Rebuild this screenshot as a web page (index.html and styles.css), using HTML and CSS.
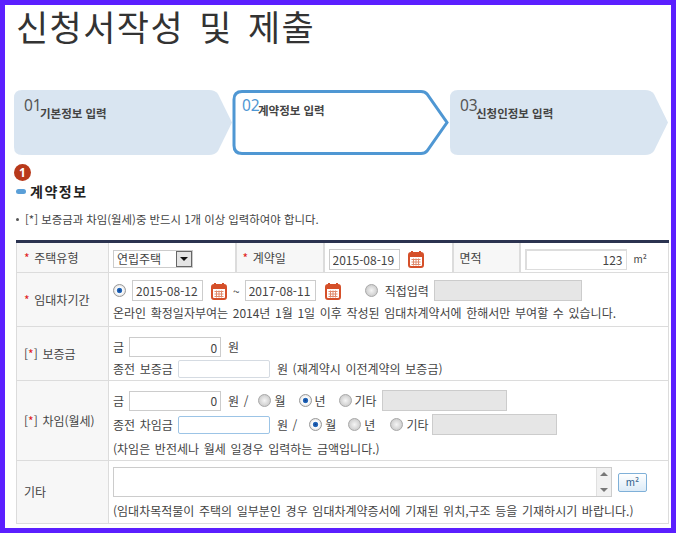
FILE: index.html
```html
<!DOCTYPE html>
<html lang="ko">
<head>
<meta charset="utf-8">
<title>신청서작성 및 제출</title>
<link rel="stylesheet" href="styles.css">
</head>
<body>
<svg class="defs" width="0" height="0">
  <symbol id="cal" viewBox="0 0 16 18">
    <rect x="1" y="3" width="14" height="14" rx="2" fill="#fff" stroke="#d5502a" stroke-width="2"/>
    <rect x="1" y="3" width="14" height="4" fill="#d5502a"/>
    <path d="M4 1v3M12 1v3" stroke="#d5502a" stroke-width="2"/>
    <path d="M3.500 9.500h9M3.500 12h9M3.500 14.500h9M5.500 8.500v7M8 8.500v7M10.500 8.500v7" stroke="#e08a6c" stroke-width="1"/>
  </symbol>
</svg>
<div class="page">
  <h1 class="title">신청서작성 및 제출</h1>
  <ol class="steps">
    <li class="step">
      <svg class="shape" viewBox="0 0 218 65"><path d="M8 0H195Q201 0 204 4L218 32.500L204 61Q201 65 195 65H8Q0 65 0 57V8Q0 0 8 0Z" fill="#d9e5f1"/></svg>
      <span class="num">01</span><span class="label low">기본정보 입력</span>
    </li>
    <li class="step cur">
      <svg class="shape" viewBox="0 0 218 65"><path d="M10 1.500H189Q193 1.500 195 4L215 32.500L195 61Q193 63.500 189 63.500H10Q2 63.500 2 55.500V9.500Q2 1.500 10 1.500Z" fill="#fff" stroke="#4f97d3" stroke-width="3"/></svg>
      <span class="num">02</span><span class="label">계약정보 입력</span>
    </li>
    <li class="step">
      <svg class="shape" viewBox="0 0 218 65"><path d="M8 0H195Q201 0 204 4L218 32.500L204 61Q201 65 195 65H8Q0 65 0 57V8Q0 0 8 0Z" fill="#d9e5f1"/></svg>
      <span class="num">03</span><span class="label low">신청인정보 입력</span>
    </li>
  </ol>
  <div class="badge">1</div>
  <h2 class="head"><span class="pill"></span>계약정보</h2>
  <p class="note"><span class="dot"></span>[*] 보증금과 차임(월세)중 반드시 1개 이상 입력하여야 합니다.</p>
  <table class="form">
    <colgroup><col class="c1"><col class="c2"><col class="c3"><col class="c4"><col class="c5"><col class="c6"></colgroup>
    <tr class="r1">
      <th><i>*</i> 주택유형</th>
      <td><span class="select">연립주택<span class="arrow"></span></span></td>
      <th class="mid"><i>*</i> 계약일</th>
      <td><span class="line"><input class="date" value="2015-08-19"><svg class="calicon ml8"><use href="#cal"/></svg></span></td>
      <th class="mid">면적</th>
      <td><span class="line"><input class="area" value="123"><span class="ml7 unit">m²</span></span></td>
    </tr>
    <tr class="r2">
      <th><i>*</i> 임대차기간</th>
      <td colspan="5">
        <div class="line">
          <input type="radio" class="radio on" checked name="p"><input class="date ml6" value="2015-08-12"><svg class="calicon ml8"><use href="#cal"/></svg><span class="tilde">~</span><input class="date ml5" value="2017-08-11"><svg class="calicon ml9"><use href="#cal"/></svg>
          <input type="radio" class="radio ml24" name="p"><span class="ml7">직접입력</span><input class="off w148 ml5" disabled>
        </div>
        <div class="text mt4">온라인 확정일자부여는 2014년 1월 1일 이후 작성된 임대차계약서에 한해서만 부여할 수 있습니다.</div>
      </td>
    </tr>
    <tr class="r3">
      <th>[<i>*</i>] 보증금</th>
      <td colspan="5">
        <div class="line"><span>금</span><input class="money ml5" value="0"><span class="ml7">원</span></div>
        <div class="line mt3"><span>종전 보증금</span><input class="blank ml5"><span class="ml7">원 (재계약시 이전계약의 보증금)</span></div>
      </td>
    </tr>
    <tr class="r4">
      <th>[<i>*</i>] 차임(월세)</th>
      <td colspan="5">
        <div class="line"><span>금</span><input class="money ml5" value="0"><span class="ml7">원 /</span>
          <input type="radio" class="radio ml10" name="a"><span class="ml3">월</span>
          <input type="radio" class="radio on ml13" checked name="a"><span class="ml3">년</span>
          <input type="radio" class="radio ml13" name="a"><span class="ml3">기타</span><input class="off w125 ml5" disabled></div>
        <div class="line mt3"><span>종전 차임금</span><input class="blank focus ml5"><span class="ml7">원 /</span>
          <input type="radio" class="radio on ml12" checked name="b"><span class="ml3">월</span>
          <input type="radio" class="radio ml12" name="b"><span class="ml3">년</span>
          <input type="radio" class="radio ml15" name="b"><span class="ml3">기타</span><input class="off w125 ml4" disabled></div>
        <div class="text mt6">(차임은 반전세나 월세 일경우 입력하는 금액입니다.)</div>
      </td>
    </tr>
    <tr class="r5">
      <th>기타</th>
      <td colspan="5">
        <div class="line">
          <div class="area-box"><span class="scroll"><b class="up"></b><b class="down"></b></span></div>
          <button class="btn" type="button">m²</button>
        </div>
        <div class="text mt6">(임대차목적물이 주택의 일부분인 경우 임대차계약증서에 기재된 위치,구조 등을 기재하시기 바랍니다.)</div>
      </td>
    </tr>
  </table>
</div>
</body>
</html>
```
FILE: styles.css
```css
* { box-sizing: border-box; }
html, body { margin: 0; padding: 0; }
body { font-family: "Noto Sans CJK KR", "Noto Sans", sans-serif; background: #fff; color: #444; }
.defs { display: block; height: 0; }
input { margin: 0; flex: none; }
.page {
  width: 676px; height: 533px;
  border: 5px solid #5b1fff;
  padding: 0 3px 0 9px;
  background: #fff;
}
.title {
  margin: 0 0 0 2px; height: 85px;
  font-size: 35px; font-weight: 400; line-height: 41px; color: #333;
  word-spacing: 4px; letter-spacing: 1.400px;
}
.steps { list-style: none; margin: 0; padding: 0; display: flex; height: 65px; }
.step { position: relative; width: 218px; height: 65px; flex: none; }
.shape { position: absolute; left: 0; top: 0; width: 218px; height: 65px; }
.num {
  position: absolute; left: 10px; top: 5px;
  font: 400 15.500px/20px "Noto Sans", sans-serif; color: #555;
}
.cur .num { color: #4f97d3; }
.label {
  position: absolute; left: 26px; top: 12px;
  font-size: 11.500px; font-weight: 700; line-height: 16px; color: #444;
}
.low { top: 15px; }
.badge {
  width: 17px; height: 17px; margin-top: 9px; border-radius: 50%;
  background: #b8391a; color: #fff;
  font: 700 12px/17px "Noto Sans", sans-serif; text-align: center;
}
.head {
  margin: 0 0 0 2px; height: 21px; display: flex; align-items: center;
  font-size: 14px; font-weight: 700; line-height: 21px; color: #222; letter-spacing: 1.500px;
}
.pill { width: 10px; height: 5px; border-radius: 3px; background: #5a9fd8; margin-right: 4px; }
.note {
  margin: 8px 0 0 2px; height: 18px; display: flex; align-items: center;
  font-size: 11.400px; line-height: 18px; color: #444;
}
.dot { width: 3px; height: 3px; border-radius: 50%; background: #555; margin-right: 6px; }
.form {
  margin: 12px 0 0 2px; width: 652px; table-layout: fixed; border-collapse: collapse;
  border-top: 3px solid #2b3350; border-bottom: 1px solid #6b7080;
  font-size: 12px; line-height: 16px; word-spacing: 1.300px;
}
.c1 { width: 92px; } .c2 { width: 127px; } .c3 { width: 88px; }
.c4 { width: 129px; } .c5 { width: 67px; } .c6 { width: 149px; }
.form th, .form td { border: 1px solid #dcdcdc; padding: 0 0 0 4px; }
.form th {
  background: #f7f7f7; font-weight: 400; text-align: left; padding-left: 7px;
  white-space: nowrap; color: #444;
}
.form th.mid { padding-left: 6px; border-left-width: 2px; border-right-width: 2px; }
.form i { font-style: normal; color: #e02020; }
.r1 { height: 31px; } .r2 { height: 54px; } .r3 { height: 54px; } .r4 { height: 80px; } .r5 { height: 63px; }
.r1 td { padding-top: 3px; }
.r2 td, .r3 td, .r4 td, .r5 td { vertical-align: top; }
.r2 td { padding-top: 7px; }
.r3 td { padding-top: 10px; }
.r4 td { padding-top: 9px; }
.r5 td { padding-top: 6px; }
.line { display: flex; align-items: center; white-space: nowrap; }
.text { white-space: nowrap; }
.mt3 { margin-top: 3px; } .mt4 { margin-top: 4px; } .mt6 { margin-top: 6px; }
.ml3 { margin-left: 3px; } .ml4 { margin-left: 4px; } .ml5 { margin-left: 5px; } .ml6 { margin-left: 6px; }
.ml7 { margin-left: 7px; } .ml8 { margin-left: 8px; } .ml9 { margin-left: 9px; } .ml10 { margin-left: 10px; }
.ml12 { margin-left: 12px; } .ml13 { margin-left: 13px; } .ml15 { margin-left: 15px; } .ml24 { margin-left: 24px; }
input:not(.radio) {
  font: inherit; color: #444; padding: 0 3px; background: #fff;
  border: 1px solid #ccc; border-radius: 0; text-align: left; outline: none;
}
.date { width: 71px; height: 21px; }
.area { width: 102px; height: 21px; text-align: right !important; border-width: 2px 1px 1px 2px !important; border-color: #ddd !important; }
.money { width: 92px; height: 20px; text-align: right !important; }
.blank { width: 92px; height: 18px; border-radius: 2px !important; border-color: #d5dbe2 !important; }
.focus { border-color: #9cc4e6 !important; }
.off { height: 21px; background: #e6e6e6 !important; border-color: #ccc !important; }
.w148 { width: 148px; } .w125 { width: 125px; }
.unit { font-size: 10px; }
.tilde { margin-left: 6px; }
.calicon { width: 16px; height: 18px; flex: none; }
.select {
  display: inline-flex; align-items: center; justify-content: space-between;
  width: 80px; height: 18px; padding: 0 0 0 3px; border: 1px solid #ccc; background: #fff;
}
.arrow {
  width: 16px; height: 16px; background: #e4e4e4; border: 1px solid #666; position: relative; flex: none;
}
.arrow::after {
  content: ""; position: absolute; left: 3px; top: 5px;
  border: 4px solid transparent; border-top: 4px solid #111; border-bottom: 0;
}
.radio {
  appearance: none; -webkit-appearance: none; width: 13px; height: 13px;
  border-radius: 50%; border: 1px solid #aaa;
  background: radial-gradient(circle at 50% 50%, #f5f5f5 0, #d5d5d5 60%, #bbb 100%);
}
.radio.on { background: radial-gradient(circle, #0f3f8f 0, #2a6fc0 30%, #fff 40%, #ddd 80%, #aaa 100%); border-color: #999; }
.area-box {
  position: relative; width: 499px; height: 30px; border: 1px solid #ccc; background: #fff; flex: none;
}
.scroll {
  position: absolute; right: 0; top: 0; bottom: 0; width: 15px; background: #f1f1f1;
  border-left: 1px solid #e0e0e0;
}
.up, .down { position: absolute; left: 3px; border: 4px solid transparent; }
.up { top: 4px; border-bottom: 4px solid #777; border-top: 0; }
.down { bottom: 4px; border-top: 4px solid #777; border-bottom: 0; }
.btn {
  margin: 0 0 0 6px; width: 29px; height: 19px; padding: 0;
  font: inherit; font-size: 10px; line-height: 16px; color: #2a5c8a;
  background: linear-gradient(#fff, #dcebf7); border: 1px solid #7fb0d8; border-radius: 2px;
}
```
